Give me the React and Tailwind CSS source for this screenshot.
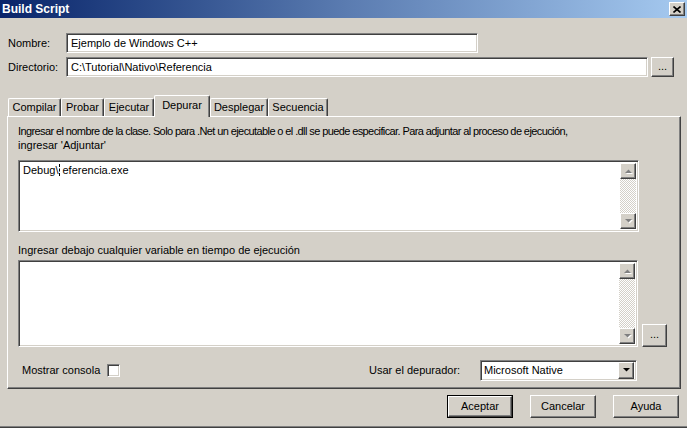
import React from "react";

const raised =
  "border border-t-white border-l-white border-r-[#404040] border-b-[#404040] shadow-[inset_-1px_-1px_0_#808080]";
const sunken =
  "border border-t-[#808080] border-l-[#808080] border-r-white border-b-white shadow-[inset_1px_1px_0_#404040,inset_-1px_-1px_0_#d4d0c8]";

function Arrow({ up, disabled }) {
  return (
    <svg width="7" height="5" viewBox="0 0 7 5" className="overflow-visible">
      {disabled && (
        <polygon
          points={up ? "1,5 8,5 4.5,1.5" : "1,1 8,1 4.5,4.5"}
          fill="#ffffff"
        />
      )}
      <polygon
        points={up ? "0,4 7,4 3.5,0.5" : "0,0 7,0 3.5,3.5"}
        fill={disabled ? "#808080" : "#000000"}
      />
    </svg>
  );
}

function ScrollBar() {
  return (
    <div className="flex flex-col w-[16px] h-full">
      <div className={`w-[16px] h-[16px] bg-[#d4d0c8] flex items-center justify-center ${raised}`}>
        <Arrow up disabled />
      </div>
      <div className="flex-1 bg-[repeating-conic-gradient(#d4d0c8_0_25%,#ffffff_0_50%)] bg-[length:2px_2px]" />
      <div className={`w-[16px] h-[16px] bg-[#d4d0c8] flex items-center justify-center ${raised}`}>
        <Arrow disabled />
      </div>
    </div>
  );
}

function Tab({ label, w, selected }) {
  if (selected) {
    return (
      <div
        className="h-[22px] -mb-[1px] relative z-10 bg-[#d4d0c8] border-t border-l border-t-white border-l-white border-r border-r-[#404040] shadow-[inset_-1px_0_0_#808080] rounded-t-[2px] flex items-start justify-center pt-[3px]"
        style={{ width: w }}
      >
        {label}
      </div>
    );
  }
  return (
    <div
      className="h-[18px] bg-[#d4d0c8] border-t border-l border-t-white border-l-white border-r border-r-[#404040] shadow-[inset_-1px_0_0_#808080] rounded-t-[2px] flex items-center justify-center"
      style={{ width: w }}
    >
      {label}
    </div>
  );
}

function Button({ children, isDefault, className = "" }) {
  if (isDefault) {
    return (
      <div className={`border border-black ${className}`}>
        <div className={`w-full h-full bg-[#d4d0c8] flex items-center justify-center ${raised}`}>
          {children}
        </div>
      </div>
    );
  }
  return (
    <div className={`bg-[#d4d0c8] flex items-center justify-center ${raised} ${className}`}>
      {children}
    </div>
  );
}

export default function App() {
  return (
    <div className="w-[687px] h-[428px] bg-[#d4d0c8] flex flex-col text-[11px] leading-[13px] text-black font-['Liberation_Sans',Arial,sans-serif] overflow-hidden">
      {/* Title bar */}
      <div className="h-[18px] shrink-0 flex items-center justify-between bg-gradient-to-r from-[#0a246a] via-[#5a7bb0] to-[#a6caf0]">
        <div className="pl-[2px] text-white font-bold text-[12px] font-['Liberation_Sans_Narrow','Liberation_Sans',Arial,sans-serif]">
          Build Script
        </div>
        <div className={`mr-[2px] w-[16px] h-[14px] bg-[#d4d0c8] flex items-center justify-center ${raised}`}>
          <svg width="8" height="7" viewBox="0 0 8 7">
            <path d="M0.5 0.5 L7.5 6.5 M7.5 0.5 L0.5 6.5" stroke="#000" strokeWidth="1.6" />
          </svg>
        </div>
      </div>

      {/* Fields */}
      <div className="flex flex-col gap-[4px] pt-[15px] pl-[8px]">
        <div className="flex items-center">
          <div className="w-[58px]">Nombre:</div>
          <div className={`w-[412px] h-[20px] bg-white flex items-center pl-[4px] ${sunken}`}>
            Ejemplo de Windows C++
          </div>
        </div>
        <div className="flex items-center">
          <div className="w-[58px]">Directorio:</div>
          <div className={`w-[582px] h-[20px] bg-white flex items-center pl-[4px] ${sunken}`}>
            C:\Tutorial\Nativo\Referencia
          </div>
          <Button className="ml-[3px] w-[23px] h-[20px]">
            <span className="-mt-[2px]">...</span>
          </Button>
        </div>
      </div>

      {/* Tabs */}
      <div className="flex items-end pl-[8px] mt-[19px] h-[20px]">
        <Tab label="Compilar" w={53} />
        <Tab label="Probar" w={43} />
        <Tab label="Ejecutar" w={50} />
        <Tab label="Depurar" w={56} selected />
        <Tab label="Desplegar" w={58} />
        <Tab label="Secuencia" w={60} />
      </div>

      {/* Panel */}
      <div className="ml-[7px] w-[674px] h-[273px] border border-t-white border-l-white border-r-[#404040] border-b-[#404040] shadow-[inset_-1px_-1px_0_#808080] flex flex-col pl-[10px] pt-[7px]">
        <div className="leading-[14px] w-[640px] whitespace-nowrap">
          <div className="tracking-[-0.6px]">
            Ingresar el nombre de la clase. Solo para .Net un ejecutable o el .dll se puede especificar. Para adjuntar al proceso de ejecución,
          </div>
          <div>ingresar 'Adjuntar'</div>
        </div>
        <div className={`mt-[8px] w-[621px] h-[72px] bg-white flex p-[2px] ${sunken}`}>
          <div className="flex-1 pl-[2px] pt-[1px] flex items-start">
            <span>Debug\</span>
            <span className="inline-block w-[4px] h-[13px] relative">
              <span className="absolute left-[1px] top-[0px] h-[12px] border-l border-dashed border-black" />
            </span>
            <span>eferencia.exe</span>
          </div>
          <ScrollBar />
        </div>
        <div className="mt-[12px]">Ingresar debajo cualquier variable en tiempo de ejecución</div>
        <div className="flex items-end mt-[3px]">
          <div className={`w-[620px] h-[87px] bg-white flex p-[2px] ${sunken}`}>
            <div className="flex-1" />
            <ScrollBar />
          </div>
          <Button className="ml-[4px] w-[25px] h-[23px]">
            <span className="-mt-[2px]">...</span>
          </Button>
        </div>
        <div className="flex items-center mt-[13px] h-[20px]">
          <div className="pl-[4px] w-[89px]">Mostrar consola</div>
          <div className={`w-[13px] h-[13px] bg-white ${sunken}`} />
          <div className="ml-[249px] w-[111px]">Usar el depurador:</div>
          <div className={`w-[157px] h-[21px] bg-white flex items-center p-[2px] ${sunken}`}>
            <div className="flex-1 pl-[1px]">Microsoft Native</div>
            <div className={`w-[16px] h-[17px] bg-[#d4d0c8] flex items-center justify-center ${raised}`}>
              <Arrow />
            </div>
          </div>
        </div>
      </div>

      {/* Buttons */}
      <div className="flex justify-end pr-[8px] mt-[6px] gap-[17px]">
        <Button isDefault className="w-[66px] h-[23px]">Aceptar</Button>
        <Button className="w-[66px] h-[23px]">Cancelar</Button>
        <Button className="w-[66px] h-[23px]">Ayuda</Button>
      </div>
      <div className="flex-1" />
      <div className="h-[2px] shrink-0 border-t border-t-[#808080] border-b border-b-[#404040]" />
    </div>
  );
}
